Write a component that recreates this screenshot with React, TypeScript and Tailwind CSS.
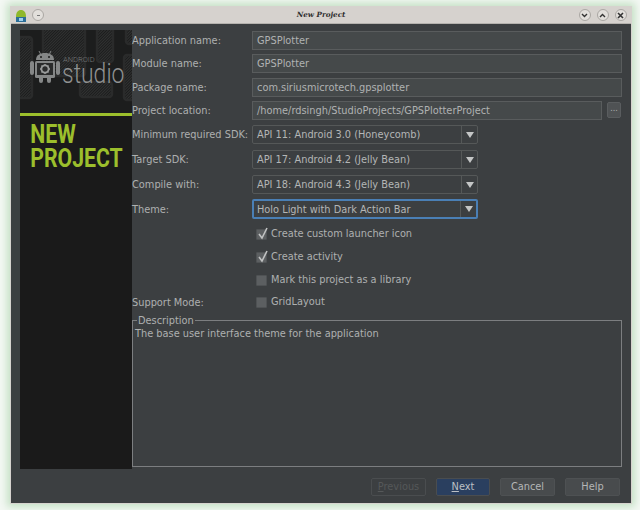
const label = "text-[9.8px] leading-[19px] text-[#aeb0b0] w-[120px] shrink-0 whitespace-nowrap";

function Field({ value, className = "" }: { value: string; className?: string }) {
  return (
    <div className={`flex-1 h-[19px] border border-[#595c5d] bg-[#45494a] pl-[4px] text-[9.8px] leading-[17px] text-[#b0b2b2] ${className}`}>
      {value}
    </div>
  );
}

function Combo({ value, focused = false }: { value: string; focused?: boolean }) {
  return (
    <div className={`flex w-[226px] rounded-[2px] text-[9.8px] text-[#b4b6b6] ${focused ? "h-[20px] border-2 border-[#4a7fb5] leading-[18px]" : "h-[19px] border border-[#555858] leading-[17px]"} bg-[#3c3f41]`}>
      <div className={`flex-1 ${focused ? "pl-[3px]" : "pl-[4px]"}`}>{value}</div>
      <div className="w-[16px] border-l border-[#555858] flex items-center justify-center">
        <svg width="8" height="6" viewBox="0 0 8 6"><path d="M0 0h8L4 6z" fill="#c4c6c6" /></svg>
      </div>
    </div>
  );
}

function Check({ text, checked = false }: { text: string; checked?: boolean }) {
  return (
    <div className="flex items-center h-[19px] pl-[4px] gap-[4px]">
      <div className="relative w-[11px] h-[11px] bg-[#5c5f61] border border-[#4f5254] rounded-[1px]">
        {checked && (
          <svg className="absolute left-[0px] -top-[3px]" width="12" height="13" viewBox="0 0 12 13">
            <path d="M2 7l3 4 5-10" fill="none" stroke="#c0c2c2" strokeWidth="1.6" />
          </svg>
        )}
      </div>
      <span className="text-[9.8px] text-[#aeb0b0]">{text}</span>
    </div>
  );
}

function Button({ children, className = "" }: { children: React.ReactNode; className?: string }) {
  return (
    <div className={`h-[18px] flex items-center justify-center rounded-[2px] border text-[9.8px] ${className}`}>
      {children}
    </div>
  );
}

function Robot() {
  return (
    <svg width="30" height="34" viewBox="0 0 30 34" className="shrink-0">
      <path d="M9 2l2 4M21 2l-2 4" stroke="#858787" strokeWidth="1" />
      <path d="M6 11C6 6 10 4 15 4s9 2 9 7z" fill="#858787" />
      <circle cx="11" cy="8" r="1" fill="#1c1d1d" />
      <circle cx="19" cy="8" r="1" fill="#1c1d1d" />
      <rect x="0" y="12" width="4" height="14" rx="2" fill="#858787" />
      <rect x="26" y="12" width="4" height="14" rx="2" fill="#858787" />
      <rect x="9" y="26" width="4" height="8" rx="2" fill="#858787" />
      <rect x="17" y="26" width="4" height="8" rx="2" fill="#858787" />
      <rect x="5" y="12" width="20" height="17" rx="1.5" fill="#858787" />
      <rect x="7" y="14" width="16" height="12" fill="#2a2b2b" />
      <circle cx="15" cy="20" r="3.6" fill="none" stroke="#999b9b" strokeWidth="1.8" />
      <path d="M15 15v2M15 23v2M10 20h2M18 20h2M11.5 16.5l1.4 1.4M17.1 22.1l1.4 1.4M18.5 16.5l-1.4 1.4M12.9 22.1l-1.4 1.4" stroke="#999b9b" strokeWidth="1.4" />
    </svg>
  );
}

function Pattern() {
  const rects = [
    [-2, 7, 14, 61],
    [23, -3, 42, 49],
    [77, -3, 16, 35],
    [60, 52, 32, 15],
    [104, 25, 12, 45],
    [106, -3, 10, 17],
  ];
  return (
    <svg className="absolute inset-0" width="112" height="83" viewBox="0 0 112 83">
      <defs>
        <pattern id="hatch" width="2" height="2" patternUnits="userSpaceOnUse" patternTransform="rotate(45)">
          <rect width="2" height="2" fill="#1b1c1c" />
          <rect width="1" height="2" fill="#313232" />
        </pattern>
      </defs>
      {rects.map(([x, y, w, h], i) => (
        <rect key={i} x={x} y={y} width={w} height={h} rx="3" fill="url(#hatch)" stroke="#2a2b2b" strokeWidth="2.5" />
      ))}
    </svg>
  );
}

export default function App() {
  return (
    <div className="w-[640px] h-[510px] bg-[#f4f8f4] pl-[10px] pt-[6px] overflow-hidden" style={{ fontFamily: '"DejaVu Sans", sans-serif' }}>
      <div className="w-[622px] h-[498px] flex flex-col border border-[#d6d3ce] shadow-[0_0_8px_3px_#c4e0c4]">
        <div className="relative h-[17px] shrink-0 bg-[#d6d2ce] border-b border-[#b5b2ae] flex items-center justify-between pl-[4px] pr-[4px]">
          <div className="flex items-center w-[48px]">
            <svg width="12" height="13" viewBox="0 0 12 13" className="shrink-0">
              <path d="M1 8C1 3 3 1 6 1s5 2 5 7z" fill="#8fb82c" />
              <rect x="1" y="8" width="10" height="5" fill="#2c6e99" />
              <rect x="4" y="9" width="4" height="3" fill="#9fd0ef" />
            </svg>
            <div className="ml-[5px] w-[12px] h-[12px] rounded-full bg-[#e2dfdb] border border-[#aaa7a3] flex items-center justify-center">
              <div className="w-[3px] h-[1px] bg-[#777]" />
            </div>
          </div>
          <div className="text-[7.2px] font-bold italic text-[#2e2e2e]" style={{ fontFamily: '"DejaVu Serif", serif' }}>
            New Project
          </div>
          <div className="flex gap-[6px]">
            <div className="w-[12px] h-[12px] rounded-full bg-[#e2dfdb] border border-[#aaa7a3] flex items-center justify-center">
              <svg width="7" height="5" viewBox="0 0 7 5"><path d="M1 1l2.5 2.5L6 1" fill="none" stroke="#333" strokeWidth="1.4" /></svg>
            </div>
            <div className="w-[12px] h-[12px] rounded-full bg-[#e2dfdb] border border-[#aaa7a3] flex items-center justify-center">
              <svg width="7" height="5" viewBox="0 0 7 5"><path d="M1 4l2.5-2.5L6 4" fill="none" stroke="#333" strokeWidth="1.4" /></svg>
            </div>
            <div className="w-[12px] h-[12px] rounded-full bg-[#e2dfdb] border border-[#aaa7a3] flex items-center justify-center">
              <svg width="7" height="7" viewBox="0 0 7 7"><path d="M1 1l5 5M6 1l-5 5" fill="none" stroke="#333" strokeWidth="1.6" /></svg>
            </div>
          </div>
        </div>

        <div className="flex-1 bg-[#3c3f41] flex flex-col pt-[6px] pl-[9px] pr-[9px]">
          <div className="flex h-[439px]">
            <div className="w-[112px] shrink-0 bg-[#1a1a1a] flex flex-col">
              <div className="relative h-[83px] bg-[#1c1d1d] overflow-hidden">
                <Pattern />
                <div className="absolute left-[10px] top-[19px]"><Robot /></div>
                <div className="absolute left-[43px] top-[26px] text-[7.5px] leading-[7px] font-light text-[#787a7a] whitespace-nowrap" style={{ fontFamily: 'Roboto, sans-serif' }}>ANDROID</div>
                <div className="absolute left-[42px] top-[33px] text-[27px] leading-[22px] font-light text-[#8f9191] origin-left scale-x-[0.85]" style={{ fontFamily: 'Roboto, sans-serif' }}>studio</div>
              </div>
              <div className="h-[3px] bg-[#9cbf2c]" />
              <div className="pl-[12px] pt-[7px] text-[25px] leading-[24px] font-bold text-[#9cbf2c] whitespace-nowrap origin-left scale-x-[0.85]" style={{ fontFamily: 'Roboto, sans-serif' }}>
                <div>NEW</div>
                <div>PROJECT</div>
              </div>
            </div>

            <div className="flex-1 min-w-0">
              <div className="flex mt-[1px]"><div className={label}>Application name:</div><Field value="GPSPlotter" /></div>
              <div className="flex mt-[4px]"><div className={label}>Module name:</div><Field value="GPSPlotter" /></div>
              <div className="flex mt-[5px]"><div className={label}>Package name:</div><Field value="com.siriusmicrotech.gpsplotter" /></div>
              <div className="flex mt-[4px]">
                <div className={label}>Project location:</div>
                <Field value="/home/rdsingh/StudioProjects/GPSPlotterProject" />
                <div className="ml-[5px] mr-[1px] w-[14px] h-[16px] mt-[1px] rounded-[2px] bg-[#4f5254] border border-[#5a5d5f] text-[8px] leading-[11px] text-center text-[#b0b2b2]">...</div>
              </div>
              <div className="flex mt-[5px]"><div className={label}>Minimum required SDK:</div><Combo value="API 11: Android 3.0 (Honeycomb)" /></div>
              <div className="flex mt-[6px]"><div className={label}>Target SDK:</div><Combo value="API 17: Android 4.2 (Jelly Bean)" /></div>
              <div className="flex mt-[6px]"><div className={label}>Compile with:</div><Combo value="API 18: Android 4.3 (Jelly Bean)" /></div>
              <div className="flex mt-[5px]"><div className={`${label} pt-[1px]`}>Theme:</div><Combo focused value="Holo Light with Dark Action Bar" /></div>
              <div className="flex mt-[6px]"><div className="w-[120px] shrink-0" /><Check checked text="Create custom launcher icon" /></div>
              <div className="flex mt-[4px]"><div className="w-[120px] shrink-0" /><Check checked text="Create activity" /></div>
              <div className="flex mt-[4px]"><div className="w-[120px] shrink-0" /><Check text="Mark this project as a library" /></div>
              <div className="flex mt-[3px]"><div className={label}>Support Mode:</div><Check text="GridLayout" /></div>
              <div className="relative mt-[8px] h-[147px] border border-[#7c7e80]">
                <div className="absolute -top-[7px] left-[4px] px-[1px] bg-[#3c3f41] text-[9.8px] leading-[13px] text-[#aeb0b0]">Description</div>
                <div className="pl-[2px] pt-[6px] text-[9.8px] leading-[13px] text-[#aeb0b0]">The base user interface theme for the application</div>
              </div>
            </div>
          </div>

          <div className="flex justify-end mt-[9px] pr-[2px]">
            <Button className="w-[55px] border-[#4a4d4f] text-[#555859]"><span><u>P</u>revious</span></Button>
            <Button className="ml-[10px] w-[54px] border-[#4a4d4f] bg-[#2a3f5f] text-[#bcc0c4]"><span><u>N</u>ext</span></Button>
            <Button className="ml-[10px] w-[55px] border-[#4e5153] bg-[#484b4d] text-[#b4b6b6]">Cancel</Button>
            <Button className="ml-[10px] w-[55px] border-[#4e5153] bg-[#484b4d] text-[#b4b6b6]">Help</Button>
          </div>
        </div>
      </div>
    </div>
  );
}
